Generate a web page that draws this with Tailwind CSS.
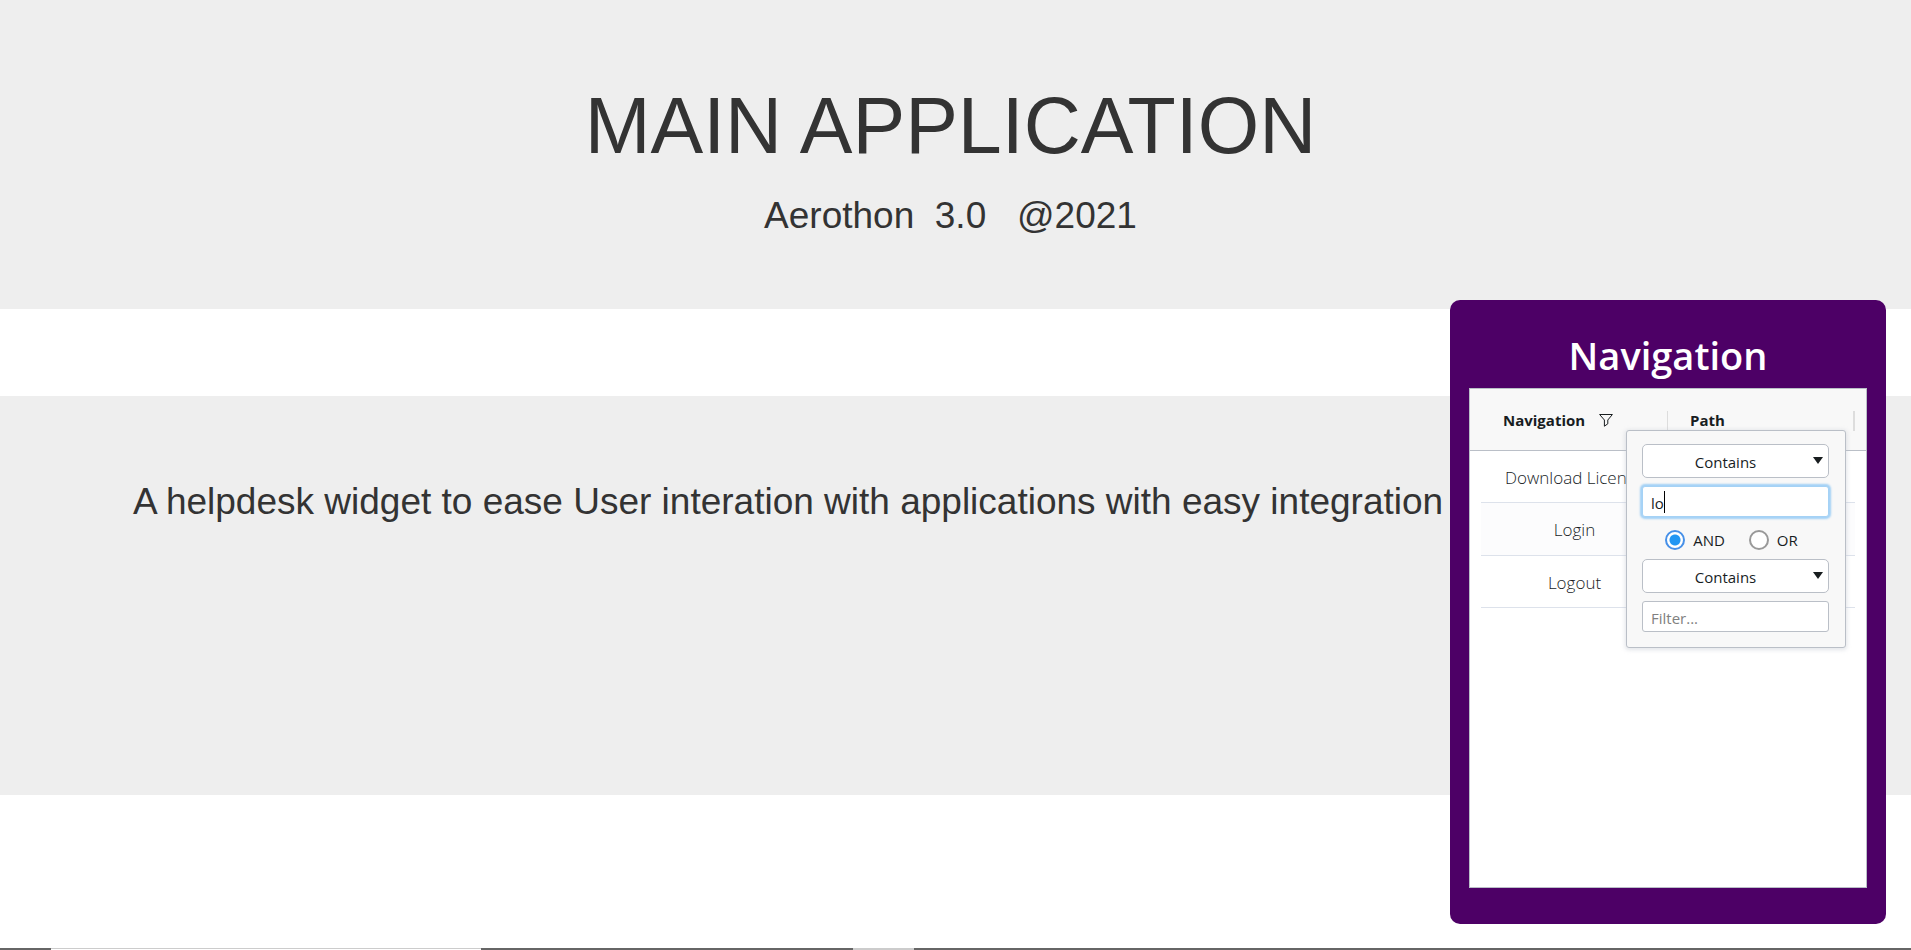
<!DOCTYPE html>
<html lang="en">
<head>
<meta charset="utf-8">
<title>Main Application</title>
<script src="https://cdn.jsdelivr.net/npm/@tailwindcss/browser@4"></script>
</head>
<body class="flex min-h-screen flex-col overflow-hidden bg-white font-['Liberation_Sans',Arial,sans-serif] text-[#333333]">
  <header class="bg-[#eeeeee] pt-20 pr-2.5 pb-[69px] text-center">
    <h1 class="text-[79px] leading-[92px]">MAIN APPLICATION</h1>
    <p class="mt-5 whitespace-pre text-[37px] leading-[48px]">Aerothon  3.0   @2021</p>
  </header>

  <main class="mt-[87px] bg-[#eeeeee] pt-[82px] pb-[269px] pl-[133px]">
    <p class="whitespace-nowrap text-[37px] leading-[48px]">A helpdesk widget to ease User interation with applications with easy integration</p>
  </main>

  <div class="mt-auto flex h-0.5 bg-[#666666]">
    <div class="ml-[51px] w-[430px] border-t border-[#cccccc] bg-white"></div>
    <div class="ml-[372px] w-[61px] bg-[#cccccc]"></div>
  </div>

  <section aria-labelledby="widget-title" class="fixed right-[25px] bottom-[26px] w-[436px] rounded-[10px] bg-[#4d0066] px-[19px] pt-[25px] pb-9 font-['Open_Sans','Noto_Sans',sans-serif] text-[#181d1f]">
    <h2 id="widget-title" class="mb-[3px] text-center text-[38px] leading-[60px] font-semibold text-white">Navigation</h2>

    <div class="relative h-[500px] border border-[#babfc7] bg-white">
      <table class="block">
        <thead class="block border-b border-[#babfc7] bg-[#f8f8f8] px-[11px]">
          <tr class="grid h-[61px] grid-cols-2 items-center pt-0.5">
            <th scope="col" class="flex h-5 items-center gap-3.5 border-r border-[#dddddd] pl-[22px] text-left text-[15px] font-bold">
              Navigation
              <button type="button" aria-label="Filter Navigation" class="pb-0.5">
                <svg class="size-[14px]" viewBox="0 0 14 14" fill="none" stroke="currentColor" stroke-width="1" stroke-linejoin="round"><path d="M.6 1.5h12.8L8.8 7v3.8L5.4 13.2V7z"/></svg>
              </button>
            </th>
            <th scope="col" class="flex h-5 items-center border-r-2 border-[#dddddd] pl-[22px] text-left text-[15px] font-bold">Path</th>
          </tr>
        </thead>
        <tbody class="block px-[11px] text-center text-[17px] font-light">
          <tr class="grid h-[52px] grid-cols-2 items-center border-b border-[#dde2eb] pt-0.5"><td class="truncate">Download License</td><td></td></tr>
          <tr class="grid h-[53px] grid-cols-2 items-center border-b border-[#dde2eb] bg-[#fcfcfd] pt-0.5"><td>Login</td><td></td></tr>
          <tr class="grid h-[52px] grid-cols-2 items-center border-b border-[#dde2eb] pt-0.5"><td>Logout</td><td></td></tr>
        </tbody>
      </table>

      <form class="absolute top-[41px] left-[156px] w-[220px] rounded-[3px] border border-[#babfc7] bg-[#f8f8f8] pt-[13px] pr-4 pb-[15px] pl-[15px] text-[15px] shadow-[0_1px_4px_1px_rgba(186,191,199,0.4)]">
        <div class="relative">
          <select aria-label="First filter type" class="block h-[34px] w-full appearance-none rounded-[5px] border border-[#babfc7] bg-white pt-0.5 pr-5 text-center"><option>Contains</option></select>
          <svg class="pointer-events-none absolute top-[13px] right-[6px] h-[7px] w-[10px]" viewBox="0 0 10 7"><path d="M0 0h10L5 7z" fill="#181d1f"/></svg>
        </div>
        <div class="relative mt-2">
          <input type="text" aria-label="First filter value" value="lo" class="block h-[31px] w-full rounded-[3px] border border-[#a5d2f5] bg-white px-2 pt-0.5 shadow-[0_0_2px_2px_rgba(33,150,243,0.4)] outline-none">
          <span class="absolute top-[5px] left-[22px] h-[22px] w-px bg-black"></span>
        </div>
        <div class="mt-3 flex h-[22px] items-center justify-center gap-6 pr-2">
          <label class="flex items-center gap-2"><input type="radio" name="join" checked class="size-5 appearance-none rounded-full border-2 border-[#4690e8] bg-white bg-[radial-gradient(circle,#2196f3_5px,transparent_6px)]">AND</label>
          <label class="flex items-center gap-2"><input type="radio" name="join" class="size-5 appearance-none rounded-full border-2 border-[#999999] bg-white">OR</label>
        </div>
        <div class="relative mt-2">
          <select aria-label="Second filter type" class="block h-[34px] w-full appearance-none rounded-[5px] border border-[#babfc7] bg-white pt-0.5 pr-5 text-center"><option>Contains</option></select>
          <svg class="pointer-events-none absolute top-[13px] right-[6px] h-[7px] w-[10px]" viewBox="0 0 10 7"><path d="M0 0h10L5 7z" fill="#181d1f"/></svg>
        </div>
        <input type="text" aria-label="Second filter value" placeholder="Filter..." class="mt-2 block h-[31px] w-full rounded-[3px] border border-[#babfc7] bg-white px-2 pt-0.5 placeholder:text-[#808080]">
      </form>
    </div>
  </section>
</body>
</html>
